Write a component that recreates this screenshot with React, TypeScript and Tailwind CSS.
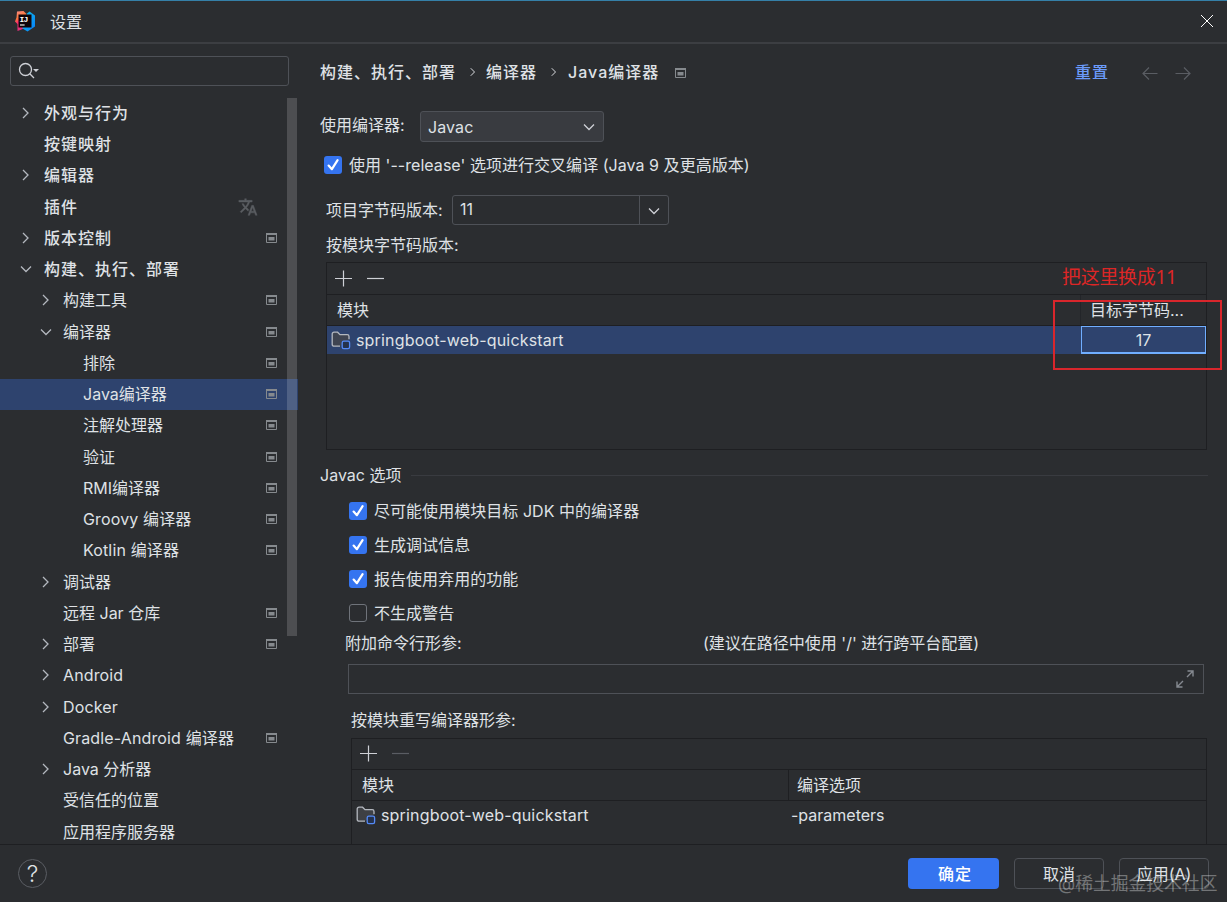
import type { ReactNode } from "react";

type TreeItem = {
  label: string;
  level: 0 | 1 | 2;
  arrow?: "right" | "down";
  project?: boolean;
  translate?: boolean;
  selected?: boolean;
};

const tree: TreeItem[] = [
  { label: "外观与行为", level: 0, arrow: "right" },
  { label: "按键映射", level: 0 },
  { label: "编辑器", level: 0, arrow: "right" },
  { label: "插件", level: 0, translate: true },
  { label: "版本控制", level: 0, arrow: "right", project: true },
  { label: "构建、执行、部署", level: 0, arrow: "down" },
  { label: "构建工具", level: 1, arrow: "right", project: true },
  { label: "编译器", level: 1, arrow: "down", project: true },
  { label: "排除", level: 2, project: true },
  { label: "Java编译器", level: 2, project: true, selected: true },
  { label: "注解处理器", level: 2, project: true },
  { label: "验证", level: 2, project: true },
  { label: "RMI编译器", level: 2, project: true },
  { label: "Groovy 编译器", level: 2, project: true },
  { label: "Kotlin 编译器", level: 2, project: true },
  { label: "调试器", level: 1, arrow: "right" },
  { label: "远程 Jar 仓库", level: 1, project: true },
  { label: "部署", level: 1, arrow: "right", project: true },
  { label: "Android", level: 1, arrow: "right" },
  { label: "Docker", level: 1, arrow: "right" },
  { label: "Gradle-Android 编译器", level: 1, project: true },
  { label: "Java 分析器", level: 1, arrow: "right" },
  { label: "受信任的位置", level: 1 },
  { label: "应用程序服务器", level: 1 },
];

const arrowIndent = ["pl-[18px]", "pl-[38px]", "pl-[58px]"];
const labelStyle = ["pl-px font-medium tracking-[1px]", "", "pl-[25px]"];

function Chevron({ dir, className = "" }: { dir: "right" | "down"; className?: string }) {
  return (
    <svg className={`shrink-0 ${className}`} width="16" height="16" viewBox="0 0 16 16" fill="none" stroke="currentColor" strokeWidth="1.3">
      <path d={dir === "right" ? "M5 3l5 5-5 5" : "M3 5.5l5 5 5-5"} />
    </svg>
  );
}

function ProjectIcon() {
  return (
    <svg className="shrink-0" width="11" height="10" viewBox="0 0 11 10">
      <path d="M0.5 0.5h10v9H0.5z" fill="none" stroke="#868a8e" />
      <path d="M0 0h11v2H0z" fill="#868a8e" />
      <path d="M2.5 4h6v3.5h-6z" fill="#868a8e" />
    </svg>
  );
}

function ModuleIcon() {
  return (
    <svg className="shrink-0" width="20" height="20" viewBox="0 0 20 20" fill="none">
      <path
        d="M9 16.2H3a1.8 1.8 0 0 1-1.8-1.8V4A1.8 1.8 0 0 1 3 2.2h3.6L9 4.6h7.2A1.8 1.8 0 0 1 18 6.4v2.8"
        stroke="#b4b8bf"
        strokeWidth="1.3"
        fill="#43454a"
        fillOpacity="0.8"
      />
      <rect x="11.2" y="11.2" width="7.4" height="7.4" rx="1.6" fill="#25324d" stroke="#548af7" strokeWidth="1.3" />
    </svg>
  );
}

function Checkbox({ checked, children }: { checked?: boolean; children: ReactNode }) {
  return (
    <>
      {checked ? (
        <span className="flex h-[18px] w-[18px] shrink-0 items-center justify-center rounded-[3px] bg-[#3574f0]">
          <svg width="18" height="18" viewBox="0 0 18 18" fill="none" stroke="white" strokeWidth="2.2">
            <path d="M4.6 9.6l3.3 3.6 5.7-9" strokeLinecap="round" strokeLinejoin="round" />
          </svg>
        </span>
      ) : (
        <span className="h-[18px] w-[18px] shrink-0 rounded-[3px] border border-[#6f737a]" />
      )}
      <span className="ml-[7.5px] tracking-[0.04px]">{children}</span>
    </>
  );
}

function Toolbar({ className }: { className: string }) {
  return (
    <div className={`flex items-center gap-[14px] pl-[7px] ${className}`}>
      <svg width="18" height="18" viewBox="0 0 18 18" fill="none" stroke="#ced0d6" strokeWidth="1.2">
        <path d="M9.5 0.5v16M1 8.5h17" />
      </svg>
      <svg width="18" height="18" viewBox="0 0 18 18" fill="none" stroke="currentColor" strokeWidth="1.2">
        <path d="M1 8.5h17" />
      </svg>
    </div>
  );
}

function Logo() {
  return (
    <svg width="21" height="21" viewBox="0 0 21 21">
      <defs>
        <linearGradient id="warm" x1="0" y1="0" x2="0.3" y2="1">
          <stop offset="0" stopColor="#fc8a8a" />
          <stop offset="0.4" stopColor="#f97a3c" />
          <stop offset="0.6" stopColor="#fe2b6d" />
          <stop offset="1" stopColor="#e0307c" />
        </linearGradient>
        <linearGradient id="cool" x1="0" y1="0" x2="1" y2="1">
          <stop offset="0" stopColor="#10c5e8" />
          <stop offset="1" stopColor="#087cfa" />
        </linearGradient>
      </defs>
      <path d="M2 0.5L8.5 0l3 3-1 14-8 3V13L0 10.5l1.5-4z" fill="url(#warm)" />
      <path d="M12 2.5l2.5-2 5.5 4v11L12.5 20.5l-5-3z" fill="url(#cool)" />
      <path d="M3.5 3.5h13v13h-13z" fill="#100308" />
      <text x="4.6" y="10.8" fill="#fff" fontSize="8" fontWeight="700" fontFamily="Liberation Mono, monospace" letterSpacing="-0.8">
        IJ
      </text>
      <path d="M5 14h4.6" stroke="#fff" strokeWidth="1.1" />
    </svg>
  );
}

function Sidebar() {
  return (
    <aside className="flex w-[298px] shrink-0 flex-col">
      <div className="ml-[10px] mt-[12px] flex h-[30px] w-[279px] shrink-0 items-center rounded-[3px] border border-[#4e5157] pl-[7px]">
        <svg width="22" height="18" viewBox="0 0 22 18" fill="none" stroke="#ced0d6" strokeWidth="1.3">
          <circle cx="7.5" cy="7.5" r="6" />
          <path d="M11.8 11.8l4.2 4.2" />
          <path d="M15 7h6l-3 3z" fill="#ced0d6" stroke="none" />
        </svg>
      </div>
      <div className="relative mt-[11.3px] min-h-0 flex-1 overflow-hidden">
        {tree.map((item) => (
          <div
            key={item.label}
            className={`flex h-[31.26px] items-center ${arrowIndent[item.level]} ${item.selected ? "bg-[#2e436e]" : ""}`}
          >
            {item.level < 2 && (
              <span className="mr-[9px] w-4 shrink-0 text-[#b4b8bf]">
                {item.arrow && <Chevron dir={item.arrow} />}
              </span>
            )}
            <span className={`${labelStyle[item.level]} ${item.label.includes("o") ? "tracking-[0.14px]" : ""}`}>
              {item.label}
            </span>
            {item.project && (
              <span className="ml-auto mr-[21px]">
                <ProjectIcon />
              </span>
            )}
            {item.translate && (
              <svg className="ml-auto mr-[40px]" width="20" height="20" viewBox="0 0 24 24" fill="#5a5d61" stroke="#5a5d61" strokeWidth="0.5">
                <path d="M12.87 15.07l-2.54-2.51.03-.03A17.52 17.52 0 0 0 14.07 6H17V4h-7V2H8v2H1v2h11.17C11.5 7.92 10.44 9.75 9 11.35 8.07 10.32 7.3 9.19 6.69 8h-2c.73 1.63 1.73 3.17 2.98 4.56l-5.09 5.02L4 19l5-5 3.11 3.11.76-2.04zM18.5 10h-2L12 22h2l1.12-3h4.75L21 22h2l-4.5-12zm-2.62 7l1.62-4.33L19.12 17h-3.24z" />
              </svg>
            )}
          </div>
        ))}
        <div className="absolute right-[1px] top-[0.7px] h-[538px] w-[10px] bg-white/16" />
      </div>
    </aside>
  );
}

function CompilerSettings() {
  return (
    <main className="flex min-w-0 flex-1 flex-col pl-[22px]">
      <div className="flex h-[56px] shrink-0 items-center font-medium tracking-[1px]">
        <span>构建、执行、部署</span>
        <Chevron dir="right" className="ml-[9px] mr-[5px] h-3 w-4" />
        <span>编译器</span>
        <Chevron dir="right" className="ml-[9px] mr-[6px] h-3 w-4" />
        <span>Java编译器</span>
        <span className="ml-[16px] mt-[2px]">
          <ProjectIcon />
        </span>
        <span className="ml-auto text-[#6b9bfa]">重置</span>
        <div className="ml-[33px] mr-[36px] flex gap-[17px] text-[#5a5d63]">
          <svg width="16" height="16" viewBox="0 0 16 16" fill="none" stroke="currentColor" strokeWidth="1.2">
            <path d="M15.5 9.5H1M7 3.5l-6 6 6 6" />
          </svg>
          <svg width="16" height="16" viewBox="0 0 16 16" fill="none" stroke="currentColor" strokeWidth="1.2">
            <path d="M0.5 9.5H15M9 3.5l6 6-6 6" />
          </svg>
        </div>
      </div>

      <div className="mt-[2px] flex h-[48px] shrink-0 items-center">
        <span className="mb-[2px] w-[100px]">使用编译器:</span>
        <div className="flex h-[31px] w-[184px] items-center justify-between rounded-[3px] border border-[#4e5157] bg-[#393b40] pl-[7px] pr-[6px] pt-px">
          <span className="tracking-[0.1px]">Javac</span>
          <Chevron dir="down" className="text-[#ced0d6]" />
        </div>
      </div>

      <div className="flex h-[30px] shrink-0 items-center pl-[3.5px]">
        <Checkbox checked>使用 '--release' 选项进行交叉编译 (Java 9 及更高版本)</Checkbox>
      </div>

      <div className="mt-[5px] flex h-[50px] shrink-0 items-center pl-[6px]">
        <span className="w-[126px]">项目字节码版本:</span>
        <div className="flex h-[30px] w-[217px] rounded-[3px] border border-[#4e5157]">
          <span className="flex-1 pl-[7px] leading-[27px]">11</span>
          <span className="flex w-[29px] items-center justify-center border-l border-[#4e5157] pt-px text-[#ced0d6]">
            <Chevron dir="down" />
          </span>
        </div>
      </div>
      <div className="h-[20px] shrink-0 pl-[6px] leading-[20px]">按模块字节码版本:</div>

      <div className="relative ml-[6px] mt-[7px] h-[188px] w-[881px] shrink-0 border border-[#1e1f22]">
        <Toolbar className="h-[31px] text-[#ced0d6]" />
        <div className="flex h-[32px] items-center border-y border-[#1e1f22]">
          <span className="flex-1 pl-[10px]">模块</span>
          <span className="h-full w-[126px] border-l border-[#232529] pl-[9px] leading-[30px]">目标字节码...</span>
        </div>
        <div className="flex h-[28px] items-center bg-[#2e436e]">
          <span className="flex flex-1 items-center gap-[5px] pl-[4px]">
            <ModuleIcon />
            <span className="tracking-[0.17px]">springboot-web-quickstart</span>
          </span>
          <span className="h-full w-[125px] border border-b-2 border-[#70aeff] text-center leading-[26px]">17</span>
        </div>
        <div className="absolute left-[735px] top-[2px] whitespace-nowrap text-[19px] leading-[24px] tracking-[-0.3px] text-[#dc2626]">
          把这里换成<span className="font-['Noto_Sans',sans-serif]">11</span>
        </div>
        <div className="absolute left-[726px] top-[37px] h-[70px] w-[169px] border-2 border-[#d9262c]" />
      </div>

      <div className="mt-[13px] flex h-[24px] shrink-0 items-center gap-[10px]">
        <span>Javac 选项</span>
        <span className="mr-[19px] h-px flex-1 bg-[#393b40]" />
      </div>

      <div className="mt-[7px] shrink-0 pl-[28.5px]">
        <div className="flex h-[34px] items-center">
          <Checkbox checked>尽可能使用模块目标 JDK 中的编译器</Checkbox>
        </div>
        <div className="flex h-[34px] items-center">
          <Checkbox checked>生成调试信息</Checkbox>
        </div>
        <div className="flex h-[34px] items-center">
          <Checkbox checked>报告使用弃用的功能</Checkbox>
        </div>
        <div className="flex h-[34px] items-center">
          <Checkbox>不生成警告</Checkbox>
        </div>
      </div>

      <div className="flex h-[26px] shrink-0 items-center pl-[25px]">
        <span className="w-[358px]">附加命令行形参:</span>
        <span>(建议在路径中使用 '/' 进行跨平台配置)</span>
      </div>
      <div className="ml-[28px] mt-[8px] flex h-[30px] w-[856px] shrink-0 items-center justify-end border border-[#4e5157] pr-[8px]">
        <svg width="20" height="20" viewBox="0 0 20 20" fill="none" stroke="#868a91" strokeWidth="1.4">
          <path d="M12 8l6-6M12.5 2h5.5v5.5M8 12l-6 6M2 12.5v5.5h5.5" />
        </svg>
      </div>
      <div className="mt-[14px] h-[24px] shrink-0 pl-[31px] leading-[24px]">按模块重写编译器形参:</div>

      <div className="ml-[31px] mt-[6px] min-h-0 w-[856px] flex-1 border border-b-0 border-[#1e1f22]">
        <Toolbar className="h-[30px] text-[#5a5d63]" />
        <div className="flex h-[32px] items-center border-y border-[#1e1f22]">
          <span className="w-[436px] pl-[10px]">模块</span>
          <span className="h-full border-l border-[#1e1f22] pl-[8px] leading-[30px]">编译选项</span>
        </div>
        <div className="flex h-[28px] items-center">
          <span className="flex w-[439px] items-center gap-[5px] pl-[4px]">
            <ModuleIcon />
            <span className="tracking-[0.17px]">springboot-web-quickstart</span>
          </span>
          <span>-parameters</span>
        </div>
      </div>
    </main>
  );
}

export default function App() {
  return (
    <div className="relative flex h-[902px] w-[1227px] flex-col overflow-hidden bg-[#2b2d30] font-['Inter','Noto_Sans_CJK_SC',sans-serif] text-[16px] leading-[24px] text-[#dfe1e5]">
      <header className="flex h-[44px] shrink-0 items-center border-b-2 border-t border-b-[#3c3e42] border-t-[#3580a8] pl-[15px] pr-[13px]">
        <Logo />
        <span className="ml-[14px]">设置</span>
        <svg className="mb-[2px] ml-auto" width="14" height="14" viewBox="0 0 14 14" stroke="#fff" strokeWidth="1">
          <path d="M1 1l12 12M13 1L1 13" />
        </svg>
      </header>

      <div className="flex min-h-0 flex-1">
        <Sidebar />
        <CompilerSettings />
      </div>

      <footer className="flex h-[58px] shrink-0 items-center border-t border-[#1e1f22] pl-[18px] pr-[18px]">
        <span className="flex h-[29px] w-[29px] items-center justify-center rounded-full border border-[#5a5d63] text-[23px] font-light">
          ?
        </span>
        <button className="ml-auto h-[31px] w-[91px] rounded-[4px] bg-[#3574f0] pl-[3px] font-medium tracking-[1px] text-white">
          确定
        </button>
        <button className="ml-[15px] h-[31px] w-[90px] rounded-[4px] border border-[#4e5157]">取消</button>
        <button className="ml-[15px] h-[31px] w-[90px] rounded-[4px] border border-[#4e5157]">应用(A)</button>
      </footer>

      <div className="absolute left-[1058px] top-[872px] whitespace-nowrap text-[17.8px] text-white/35">@稀土掘金技术社区</div>
    </div>
  );
}
